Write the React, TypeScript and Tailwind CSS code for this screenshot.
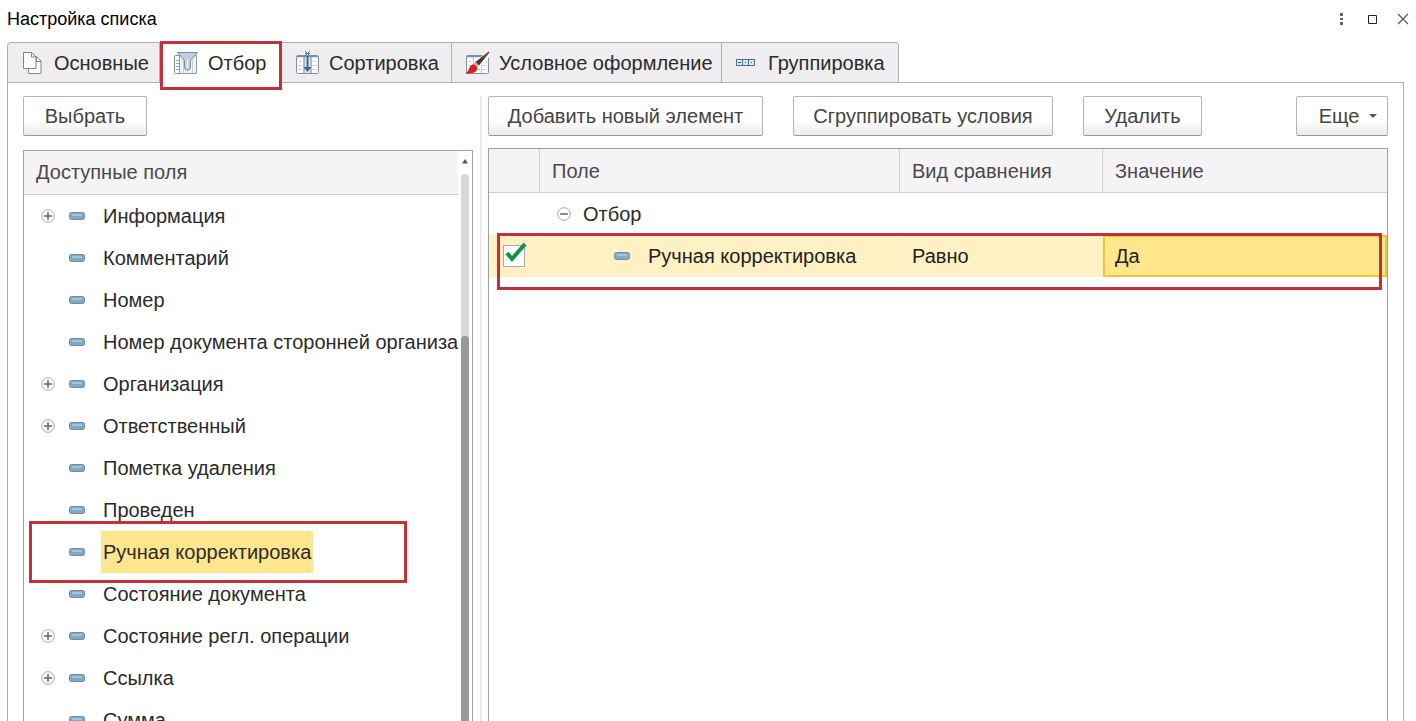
import { useState, type ReactNode } from 'react'

interface Field {
  name: string
  expandable?: boolean
}

const FIELDS: Field[] = [
  { name: 'Информация', expandable: true },
  { name: 'Комментарий' },
  { name: 'Номер' },
  { name: 'Номер документа сторонней организации' },
  { name: 'Организация', expandable: true },
  { name: 'Ответственный', expandable: true },
  { name: 'Пометка удаления' },
  { name: 'Проведен' },
  { name: 'Ручная корректировка' },
  { name: 'Состояние документа' },
  { name: 'Состояние регл. операции', expandable: true },
  { name: 'Ссылка', expandable: true },
  { name: 'Сумма' },
]

const TABS = [
  { name: 'Основные', icon: <PagesIcon />, width: 'w-[153px]' },
  { name: 'Отбор', icon: <FilterIcon />, width: 'w-[122px]' },
  { name: 'Сортировка', icon: <SortIcon />, width: 'w-[170px]' },
  { name: 'Условное оформление', icon: <BrushIcon />, width: 'w-[270px]' },
  { name: 'Группировка', icon: <GroupIcon />, width: 'w-[177px]' },
]

function PagesIcon() {
  return (
    <svg width="24" height="24" viewBox="0 0 24 24" fill="#fff" stroke="#7f8489">
      <path d="M7.500 5.500h8l4.500 4.500v12.500h-12.500z" />
      <path d="M15.500 6v4.500h4.500" fill="none" />
      <path d="M2.500 1.500h8l4.500 4.500v11.500h-12.500z" />
      <path d="M10.500 1.500v4.500h4.500" fill="none" />
    </svg>
  )
}

function Sheet() {
  return (
    <>
      <rect x="1.500" y="4.500" width="22" height="18" rx="1" fill="#fff" stroke="#7d93a3" />
      <path d="M2 5.500h21" stroke="#7890a1" strokeWidth="1.500" />
      <path d="M8.500 6v16M16.500 6v16" stroke="#b3c0ca" />
      <path
        d="M4 10.500h3M10 10.500h5M18 10.500h4M4 14.500h3M10 14.500h5M18 14.500h4M4 18.500h3M10 18.500h5M18 18.500h4"
        stroke="#b9c2c9"
        strokeDasharray="2 1"
      />
    </>
  )
}

function FilterIcon() {
  return (
    <svg width="26" height="24" viewBox="0 0 26 24" fill="none">
      <rect x="1.500" y="4.500" width="6" height="18" rx="1" fill="#fff" stroke="#7d8f9c" />
      <path d="M6.500 4.500h17v18h-17z" fill="#edf2f6" stroke="#8b9daa" />
      <path d="M3 9.500h3M3 12.500h3M3 15.500h3M3 18.500h3" stroke="#8fa0ac" />
      <path d="M10.500 9v13M19.500 9v13" stroke="#c4ced6" />
      <path
        d="M4.500 1.500h20l-7 8v6.500q-.500 3.500-3 3.500t-3-3.500v-6.500z"
        fill="#c3cfda"
        stroke="#7b8a96"
      />
      <path d="M14.500 9v7.500" stroke="#e3eaf0" strokeWidth="2" />
    </svg>
  )
}

function SortIcon() {
  return (
    <svg width="25" height="24" viewBox="0 0 25 24" fill="none">
      <Sheet />
      <path d="M9 6h7v16h-7z" fill="#dde7ee" />
      <path d="M9.500 6v16M15.500 6v16" stroke="#a4b6c3" />
      <path d="M12.500 5v12" stroke="#41688a" strokeWidth="2" />
      <path d="M8.500 16h8l-4 5z" fill="#41688a" />
      <path d="M10 0l5 5M15 0l-5 5M10 2.500h5" stroke="#5a7d98" />
    </svg>
  )
}

function BrushIcon() {
  return (
    <svg width="25" height="24" viewBox="0 0 25 24" fill="none">
      <Sheet />
      <path d="M24 2L8 18" stroke="#fff" strokeWidth="6" />
      <path d="M23.500 .500l1 1L14 14.500l-3.500-3.500z" fill="#4c3529" />
      <path d="M23.500 1.500L18 7.500" stroke="#9a6a4a" />
      <path d="M10.500 11l3.500 3.500-1.500 1.500-3.500-3.500z" fill="#b9a79b" />
      <path d="M9 13l3.500 3.500q0 3.500-3.500 5t-8.500 1q3-2 3.500-5 1.500-4 5-4.500z" fill="#d81f26" />
    </svg>
  )
}

function GroupIcon() {
  return (
    <svg width="24" height="24" viewBox="0 0 24 24" fill="#dce8f0" stroke="#4f7187">
      <path d="M1.500 8.500h6v6h-6zM7.500 8.500h6v6h-6zM13.500 8.500h6v6h-6z" />
      <path d="M1 8.500h19M1 14.500h19" />
      <path d="M3 11.500h3M10 11.500h1M16 11.500h1" stroke="#35566d" />
    </svg>
  )
}

function FieldIcon() {
  return (
    <svg className="shrink-0" width="16" height="8" viewBox="0 0 16 8">
      <rect x=".5" y=".5" width="15" height="7" rx="2" fill="#82a9c3" stroke="#6c8da3" />
      <path d="M3 3h10" stroke="#a3c3d8" strokeWidth="2" />
    </svg>
  )
}

function ToggleIcon({ open }: { open?: boolean }) {
  return (
    <svg width="14" height="14" viewBox="0 0 14 14" fill="none">
      <circle cx="7" cy="7" r="6.300" stroke="#a6a6a6" />
      <path d={open ? 'M3 7h8' : 'M3 7h8M7 3v8'} stroke="#666" strokeWidth="1.500" />
    </svg>
  )
}

function Button({ children, className = '' }: { children: ReactNode; className?: string }) {
  return (
    <button
      type="button"
      className={`flex h-10 shrink-0 items-center justify-center rounded-xs border border-[#b5b5b5] border-b-[#999] bg-linear-to-b from-white from-60% to-[#ebebeb] whitespace-nowrap text-[#444] ${className}`}
    >
      {children}
    </button>
  )
}

// red marker frame drawn over the highlighted places
function Frame({ className }: { className: string }) {
  return <span className={`pointer-events-none absolute z-10 border-3 border-[#c4303a] ${className}`} />
}

function FieldTree() {
  const [selected, setSelected] = useState('Ручная корректировка')

  return (
    <div className="flex min-h-0 flex-1 border border-b-0 border-[#a0a0a0]">
      <div className="min-w-0 flex-1">
        <div className="h-11 overflow-hidden border-b border-[#d0d0d0] bg-[#f5f3f6] pl-3 leading-[42px] text-[#4a4a4a]">
          Доступные поля
        </div>
        <ul>
          {FIELDS.map((f) => (
            <li key={f.name} className="relative flex h-[42px] items-center pl-[17px]">
              <span className="mr-[14px] flex w-[14px] shrink-0">
                {f.expandable && (
                  <button type="button" aria-label={`Развернуть ${f.name}`}>
                    <ToggleIcon />
                  </button>
                )}
              </span>
              <FieldIcon />
              <span className="ml-4 min-w-0 flex-1 overflow-hidden">
                <button
                  type="button"
                  onClick={() => setSelected(f.name)}
                  className={`block h-[42px] px-[2px] whitespace-nowrap ${
                    f.name === selected ? 'bg-[#ffe68c]' : ''
                  }`}
                >
                  {f.name}
                </button>
              </span>
              {f.name === 'Ручная корректировка' && (
                <Frame className="-top-[10px] left-[5px] h-[62px] w-[378px]" />
              )}
            </li>
          ))}
        </ul>
      </div>
      <div className="flex w-[14px] flex-col items-center pt-2">
        <svg width="6" height="5" viewBox="0 0 6 5">
          <path d="M0 4.500L3 0l3 4.500z" fill="#555" />
        </svg>
        <div className="mt-[10px] h-[166px] w-2 shrink-0 rounded-t bg-[#d8d8d8]" />
        <div className="-mt-1 w-2 flex-1 rounded-t bg-[#999]" />
      </div>
    </div>
  )
}

function FilterTable() {
  const [enabled, setEnabled] = useState(true)

  return (
    <div className="min-h-0 flex-1 border border-b-0 border-[#a0a0a0]">
      <table className="w-full table-fixed border-separate border-spacing-0 text-left">
        <thead>
          <tr className="h-11 bg-[#f5f3f6] text-[#4a4a4a] *:border-b *:border-[#d0d0d0] *:font-normal">
            <th className="w-[51px] border-r" aria-label="Использование" />
            <th className="w-[360px] border-r pl-3">Поле</th>
            <th className="w-[203px] border-r pl-3">Вид сравнения</th>
            <th className="pl-3">Значение</th>
          </tr>
        </thead>
        <tbody>
          <tr className="h-[42px]">
            <td />
            <td colSpan={3} className="pl-[17px]">
              <div className="flex items-center gap-3">
                <button type="button" aria-label="Свернуть Отбор">
                  <ToggleIcon open />
                </button>
                Отбор
              </div>
            </td>
          </tr>
          <tr className="relative h-[42px] bg-[#fff1c4] text-[#222]">
            <td className="border-r border-[#fff7df] pl-[14px]">
              <label className="relative block size-[22px]">
                <input
                  type="checkbox"
                  aria-label="Ручная корректировка"
                  checked={enabled}
                  onChange={(e) => setEnabled(e.target.checked)}
                  className="block size-[22px] appearance-none border border-[#aaa] bg-white"
                />
                {enabled && (
                  <svg className="absolute -top-[3px] left-[2px]" width="22" height="22" viewBox="0 0 22 22">
                    <path d="M2 11l5 6L20 2" fill="none" stroke="#10924e" strokeWidth="4" />
                  </svg>
                )}
              </label>
            </td>
            <td className="border-r border-[#fff7df] pl-[74px]">
              <div className="flex items-center gap-[18px]">
                <FieldIcon />
                Ручная корректировка
              </div>
            </td>
            <td className="pl-3">Равно</td>
            <td className="border-2 border-[#e9c936] bg-[#ffe68c] pl-[10px]">
              Да
              <Frame className="-top-[2px] right-[5px] left-2 h-[57px]" />
            </td>
          </tr>
        </tbody>
      </table>
    </div>
  )
}

export default function App() {
  const [tab, setTab] = useState('Отбор')

  return (
    <div className="flex h-screen flex-col overflow-hidden bg-white px-[7px] font-['Liberation_Sans',Arial,sans-serif] text-xl text-[#2b2b2b]">
      <header className="flex h-[42px] shrink-0 items-center justify-between pb-1">
        <h1 className="text-lg text-black">Настройка списка</h1>
        <div className="flex items-center gap-4">
          <button type="button" aria-label="Меню">
            <svg width="14" height="14" viewBox="0 0 14 14" fill="#666">
              <path d="M5 1h3v3h-3zM5 6h3v2h-3zM5 10h3v3h-3z" />
            </svg>
          </button>
          <button type="button" aria-label="Развернуть">
            <svg width="14" height="14" viewBox="0 0 14 14" fill="none" stroke="#222">
              <path d="M3.500 3.500h8v8h-8z" />
            </svg>
          </button>
          <button type="button" aria-label="Закрыть">
            <svg width="14" height="14" viewBox="0 0 14 14" fill="none" stroke="#555" strokeWidth="1.200">
              <path d="M3 2l10 10M13 2L3 12" />
            </svg>
          </button>
        </div>
      </header>

      <div role="tablist" className="relative z-10 flex h-[41px] shrink-0">
        {TABS.map((t) => (
          <button
            key={t.name}
            type="button"
            role="tab"
            aria-selected={t.name === tab}
            onClick={() => setTab(t.name)}
            className={`relative flex items-center gap-[9px] border-t border-r border-[#b0b0b0] pl-[13px] whitespace-nowrap first:rounded-tl first:border-l last:rounded-tr ${t.width} ${
              t.name === tab ? 'bg-white' : 'border-b bg-[#f0edf0]'
            }`}
          >
            {t.icon}
            {t.name}
            {t.name === 'Отбор' && <Frame className="-top-[2px] left-0 h-[49px] w-[122px]" />}
          </button>
        ))}
      </div>

      <main className="-mt-px mr-[5px] flex min-h-0 flex-1 border border-b-0 border-[#b0b0b0] px-[15px] pt-[13px]">
        <section className="flex w-[450px] shrink-0 flex-col">
          <div className="mb-[14px] flex">
            <Button className="w-[124px]">Выбрать</Button>
          </div>
          <FieldTree />
        </section>
        <div className="mx-[7px] border-l border-dotted border-[#ccc]" />
        <section className="flex min-w-0 flex-1 flex-col">
          <div className="mb-3 flex gap-[30px]">
            <Button className="w-[275px]">Добавить новый элемент</Button>
            <Button className="w-[260px]">Сгруппировать условия</Button>
            <Button className="w-[119px]">Удалить</Button>
            <Button className="ml-auto w-[92px] gap-[10px] pl-3">
              Еще
              <svg width="8" height="4" viewBox="0 0 8 4" fill="#555">
                <path d="M0 0h8L4 4z" />
              </svg>
            </Button>
          </div>
          <FilterTable />
        </section>
      </main>
    </div>
  )
}
